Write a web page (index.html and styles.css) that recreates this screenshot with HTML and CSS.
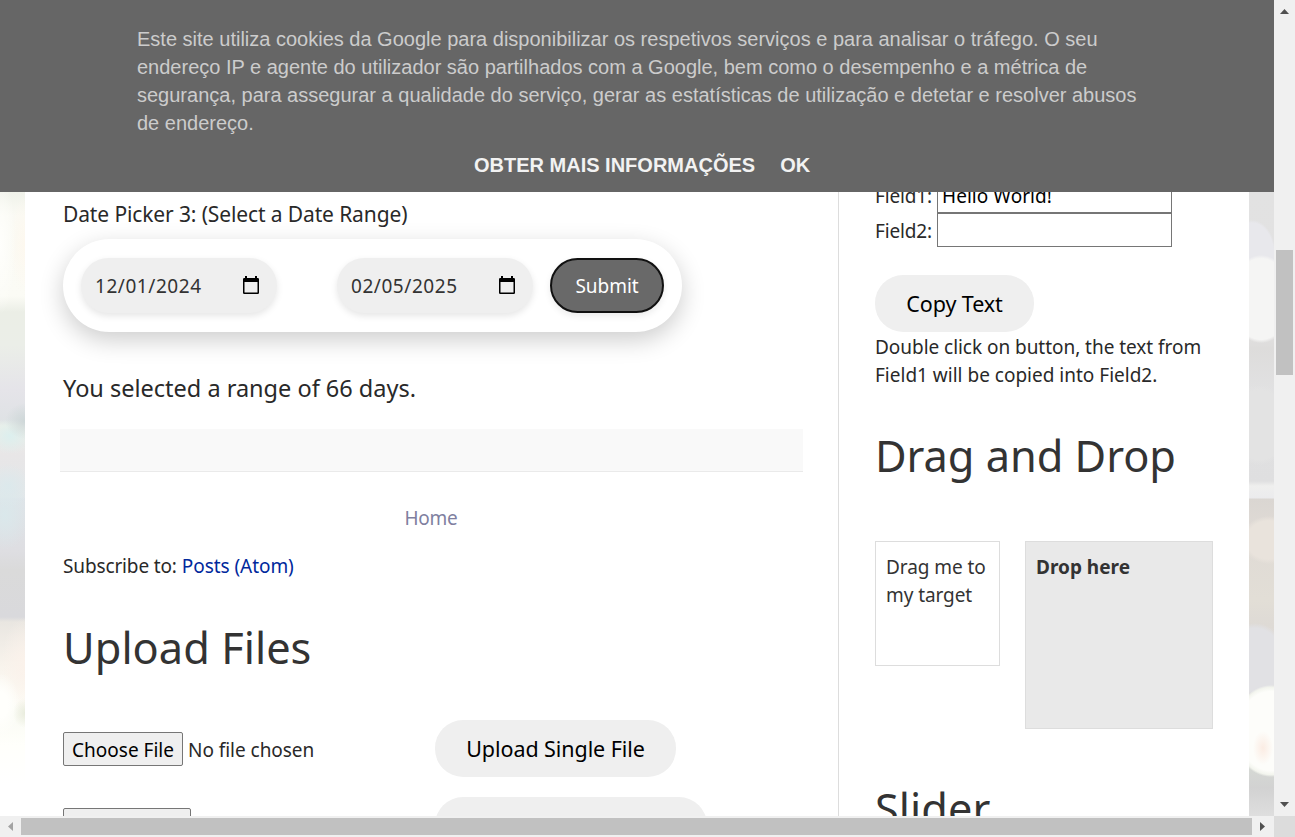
FILE: index.html
```html
<!DOCTYPE html>
<html lang="en">
<head>
<meta charset="utf-8">
<title>Automation Testing Practice</title>
<link rel="stylesheet" href="styles.css">
</head>
<body>
<div class="window">
  <div class="viewport">
    <div class="backdrop backdrop-left"></div>
    <main class="posts">
      <p class="picker-label">Date Picker 3: (Select a Date Range)</p>
      <div class="range">
        <div class="date"><span>12/01/2024</span>
          <svg class="calendar" viewBox="0 0 18 19"><path fill="#000" fill-rule="evenodd" d="M3 0h2v2h8V0h2v2h.8q1.200 0 1.200 1.200v13.600q0 1.200-1.200 1.200H2.200Q1 18 1 16.800V3.200Q1 2 2.200 2H3zM2.500 6v10.500h13V6z"/></svg>
        </div>
        <div class="date date-end"><span>02/05/2025</span>
          <svg class="calendar" viewBox="0 0 18 19"><path fill="#000" fill-rule="evenodd" d="M3 0h2v2h8V0h2v2h.8q1.200 0 1.200 1.200v13.600q0 1.200-1.200 1.200H2.200Q1 18 1 16.800V3.200Q1 2 2.200 2H3zM2.500 6v10.500h13V6z"/></svg>
        </div>
        <button class="submit">Submit</button>
      </div>
      <p class="result">You selected a range of 66 days.</p>
      <div class="post-footer"></div>
      <div class="pager"><a class="home">Home</a></div>
      <p class="subscribe"><span>Subscribe to:</span><a class="feed">Posts (Atom)</a></p>
      <h2 class="title">Upload Files</h2>
      <div class="upload">
        <div class="picker"><button class="choose">Choose File</button><span class="no-file">No file chosen</span></div>
        <button class="pill upload-one">Upload Single File</button>
      </div>
      <div class="upload upload-second">
        <div class="picker"><button class="choose choose-many"></button></div>
        <button class="pill upload-many"></button>
      </div>
    </main>
    <aside class="sidebar">
      <div class="field field-first"><label>Field1:</label><div class="input">Hello World!</div></div>
      <div class="field"><label>Field2:</label><div class="input"></div></div>
      <button class="pill copy">Copy Text</button>
      <p class="hint">Double click on button, the text from<br><span class="hint-end">Field1 will be copied into Field2.</span></p>
      <h2 class="title drag-title">Drag and Drop</h2>
      <div class="dnd">
        <div class="drag">Drag me to<br>my target</div>
        <div class="drop">Drop here</div>
      </div>
      <h2 class="title slider-title">Slider</h2>
    </aside>
    <div class="backdrop backdrop-right"></div>
    <div class="cookies">
      <p class="cookies-text">Este site utiliza cookies da Google para disponibilizar os respetivos serviços e para analisar o tráfego. O seu<br>endereço IP e agente do utilizador são partilhados com a Google, bem como o desempenho e a métrica de<br>segurança, para assegurar a qualidade do serviço, gerar as estatísticas de utilização e detetar e resolver abusos<br>de endereço.</p>
      <div class="cookies-actions"><a>OBTER MAIS INFORMAÇÕES</a><a>OK</a></div>
    </div>
  </div>
  <div class="vbar">
    <svg class="arrow" viewBox="0 0 21 21"><path fill="#505050" d="M6 14l4.500-5L15 14z"/></svg>
    <div class="vthumb"></div>
    <svg class="arrow" viewBox="0 0 21 21"><path fill="#505050" d="M6 7l4.500 5L15 7z"/></svg>
  </div>
  <div class="hbar">
    <svg class="arrow" viewBox="0 0 21 21"><path fill="#a3a3a3" d="M13 6l-5 4.500 5 4.500z"/></svg>
    <div class="hthumb"></div>
    <svg class="arrow" viewBox="0 0 21 21"><path fill="#505050" d="M8 6l5 4.500-5 4.500z"/></svg>
  </div>
  <div class="corner"></div>
</div>
</body>
</html>
```
FILE: styles.css
```css
* { box-sizing: border-box; }
body {
  margin: 0;
  overflow: hidden;
  font: 19px/28px "Noto Sans", sans-serif;
  color: #292929;
}
p, h2 { margin: 0; white-space: nowrap; }
button { font: inherit; padding: 0; border: 0; color: #000; white-space: nowrap; }

.window {
  display: grid;
  grid-template: 816px 21px / 1274px 21px;
  width: 1295px;
  height: 837px;
}
.viewport {
  position: relative;
  display: flex;
  overflow: hidden;
  background: #fff;
}

/* Blurred bokeh wallpaper at both sides of the page */
.backdrop { flex: 0 0 25px; height: 816px; }
.backdrop-left {
  background:
    radial-gradient(ellipse 16px 70px at 0 245px, #fffffc, transparent),
    radial-gradient(ellipse 16px 50px at 25px 245px, #fff7ecaa, transparent),
    radial-gradient(ellipse 20px 18px at 25px 421px, #ced7d8, transparent),
    radial-gradient(ellipse 22px 18px at 10px 436px, #dcefee, transparent),
    radial-gradient(ellipse 24px 22px at 8px 486px, #dce9ec, transparent),
    radial-gradient(ellipse 24px 35px at 5px 515px, #dae8eb, transparent),
    radial-gradient(ellipse 12px 15px at 25px 713px, #e9ecdd, transparent),
    radial-gradient(ellipse 20px 32px at 0 705px, #fffffc 40%, transparent),
    radial-gradient(ellipse 24px 48px at 25px 665px, #fbf2eb, transparent),
    linear-gradient(#f0f2ea 192px, #fafaf4 215px, #fbfbf5 296px, #ebeee6 312px, #ebeee8 345px, #e5e4e9 390px, #dfe2e5 420px, #edf0e9 426px, #e8e6e7 455px, #e3e7e9 497px, #dfe4e8 499px, #dedee2 550px, #dadada 570px, #d9d9dc 617px, #e9e6e1 622px, #f8f3ec 665px, #fdfcf6 700px, #fafbf4 716px, #fffffb 745px, #fff 785px);
}
.backdrop-right {
  background:
    radial-gradient(ellipse 32px 44px at 12px 299px, #f5f5f4 0 92%, transparent),
    radial-gradient(ellipse 24px 36px at 3px 256px, #e8e8ec 0 92%, transparent),
    radial-gradient(ellipse 10px 17px at 14px 748px, #fbece3, transparent),
    radial-gradient(ellipse 38px 46px at 22px 731px, #fdfdfa 0 86%, #f3f5ee 95%, transparent),
    radial-gradient(ellipse 32px 37px at 6px 660px, #e1e1e4 0 86%, transparent),
    radial-gradient(ellipse 34px 40px at 10px 425px, #e3e3e3 0 86%, transparent),
    radial-gradient(ellipse 28px 24px at 20px 540px, #e9e3dc 0 80%, transparent),
    linear-gradient(#e2e2e2 192px, #e2e1e1 330px, #dddcdb 348px, #e1e1e2 390px, #dfdfe0 481px, #efefee 486px, #ebebed 498px, #dad6d2 499px, #dfdad5 530px, #e2ded6 600px, #dedad5 625px, #e2deda 680px, #d5d8d4 770px, #d2d2d2 788px, #dedede 816px);
}

.posts {
  flex: 0 0 813px;
  padding: 200px 0 0 38px;
}
.picker-label { height: 29px; font-size: 21px; letter-spacing: -0.12px; }
.range {
  display: flex;
  align-items: center;
  width: 619px;
  height: 93px;
  margin-top: 10px;
  padding-left: 18px;
  border-radius: 47px;
  background: #fff;
  box-shadow: 0 8px 25px rgba(0, 0, 0, .2);
}
.date {
  display: flex;
  align-items: center;
  justify-content: space-between;
  width: 196px;
  height: 55px;
  padding: 0 17px 0 14px;
  border-radius: 28px;
  background: #efefef;
  box-shadow: 0 3px 7px rgba(0, 0, 0, .1);
  color: #333;
  letter-spacing: .55px;
}
.calendar { width: 18px; height: 19px; }
.submit {
  width: 114px;
  height: 55px;
  margin-left: 17px;
  border: 2px solid #111;
  border-radius: 28px;
  background: #696969;
  box-shadow: 0 3px 7px rgba(0, 0, 0, .08);
  color: #fff;
  font-size: 19px;
  letter-spacing: -.05px;
}
.date-end { margin-left: 60px; }
.result { height: 28px; margin-top: 42px; font-size: 23.5px; }
.post-footer {
  width: 743px;
  height: 43px;
  margin: 27px 0 0 -3px;
  border-bottom: 1px solid #eaeaea;
  background: #f9f9f9;
}
.pager { width: 736px; margin-top: 32px; text-align: center; }
.home { color: #807f9f; letter-spacing: -.3px; }
.subscribe { display: flex; gap: 5px; margin-top: 20px; letter-spacing: -.06px; }
.subscribe span { letter-spacing: -.14px; }
.feed { color: #00289c; }
.title {
  height: 60px;
  font-size: 43.300px;
  line-height: 60px;
  font-weight: 400;
  letter-spacing: .05px;
  color: #333;
}
.posts .title { margin-top: 38px; }
.upload { display: flex; align-items: center; height: 57px; margin-top: 42px; }
.upload-second { margin-top: 20px; }
.picker { display: flex; align-items: center; width: 372px; padding-top: 1px; }
.upload-second .picker { padding-top: 0; padding-bottom: 1px; }
.choose {
  width: 120px;
  height: 34px;
  padding-top: 1px;
  border: 1px solid #767676;
  border-radius: 2px;
  background: #efefef;
}
.choose-many { width: 128px; }
.no-file { margin-left: 5px; padding-top: 2px; letter-spacing: -.04px; }
.pill {
  height: 57px;
  border-radius: 28px;
  background: #efefef;
  font-size: 21.500px;
  letter-spacing: -.07px;
}
.upload-one { width: 241px; }
.upload-many { width: 272px; }

.sidebar {
  flex: 0 0 411px;
  padding: 179px 0 0 36px;
  border-left: 1px solid #ddd;
}
.field { display: flex; align-items: center; gap: 5px; height: 34px; }
.field label { width: 57px; padding-top: 1px; letter-spacing: -.15px; }
.field-first label { padding-top: 0; }
.input {
  width: 235px;
  height: 34px;
  padding: 3px 0 0 4px;
  border: 1px solid #767676;
  line-height: 26px;
  color: #000;
  letter-spacing: .05px;
}
.copy { display: block; width: 159px; margin-top: 28px; }
.hint { margin-top: 1px; letter-spacing: -.04px; }
.hint-end { letter-spacing: 0; }
.drag-title { margin-top: 37px; letter-spacing: -.02px; }
.dnd { display: flex; gap: 25px; margin-top: 55px; color: #333; }
.drag, .drop { padding: 11px 10px; border: 1px solid #ddd; }
.drag { width: 125px; height: 125px; letter-spacing: -.08px; white-space: nowrap; }
.drop { width: 188px; height: 188px; background: #e9e9e9; font-weight: 700; }
.slider-title { margin-top: 50px; }

.cookies {
  position: absolute;
  top: 0;
  left: 0;
  width: 1274px;
  height: 192px;
  padding: 25px 0 0 137px;
  background: #666;
  color: #ccc;
  font: 20px/28px "Liberation Sans", Arial, sans-serif;
}
.cookies-actions {
  display: flex;
  gap: 25px;
  margin: 14px 0 0 337px;
  color: #f2f2f2;
  font-weight: 700;
}

.vbar, .hbar { display: flex; background: #f0f0f0; }
.vbar { flex-direction: column; }
.arrow { display: block; flex: none; width: 21px; height: 21px; }
.vthumb { width: 17px; height: 125px; margin: 229px auto auto 2px; background: #c1c1c1; }
.hthumb { width: 1231px; height: 17px; margin-top: 2px; background: #c1c1c1; }
.corner { background: #dcdcdc; }
```
